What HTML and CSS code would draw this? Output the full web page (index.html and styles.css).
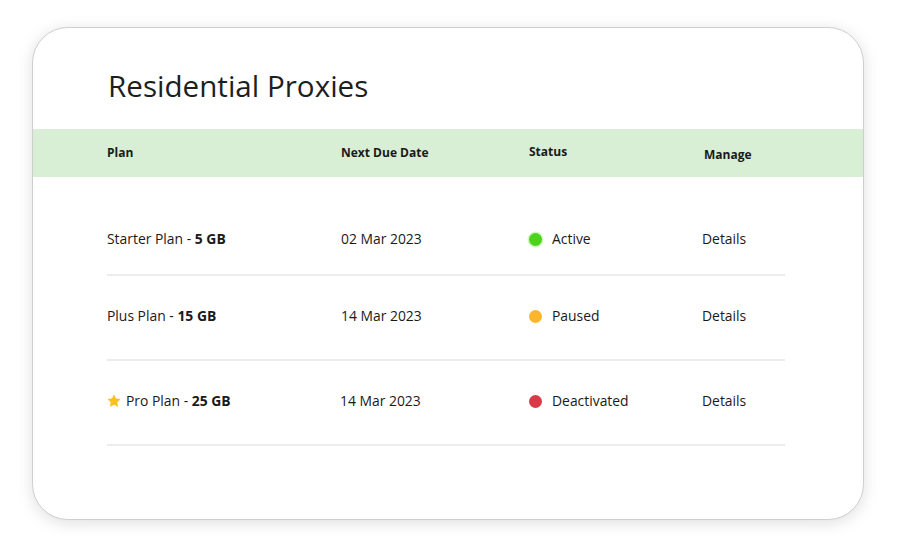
FILE: index.html
```html
<!DOCTYPE html>
<html lang="en">
<head>
<meta charset="utf-8">
<title>Residential Proxies</title>
<link rel="stylesheet" href="styles.css">
</head>
<body>
<div class="card">
  <h1 class="title">Residential Proxies</h1>
  <div class="head">
    <div class="cols">
      <div class="h">Plan</div>
      <div class="h">Next Due Date</div>
      <div class="h h-status">Status</div>
      <div class="h h-manage">Manage</div>
    </div>
  </div>
  <div class="rows">
    <div class="row row-first">
      <div class="cell">Starter Plan - <b>5 GB</b></div>
      <div class="cell">02 Mar 2023</div>
      <div class="cell status"><span class="dot dot-active"></span>Active</div>
      <div class="cell manage">Details</div>
    </div>
    <div class="row">
      <div class="cell">Plus Plan - <b>15 GB</b></div>
      <div class="cell">14 Mar 2023</div>
      <div class="cell status"><span class="dot dot-paused"></span>Paused</div>
      <div class="cell manage">Details</div>
    </div>
    <div class="row">
      <div class="cell"><svg class="star" viewBox="0 0 24 24" width="14" height="14"><path d="M12 1.8l3.1 6.5 7.1.9-5.2 4.9 1.3 7.1L12 17.8l-6.3 3.4L7 14.1 1.8 9.2l7.1-.9z" fill="#fbc21f" stroke="#f5b50f" stroke-width="1" stroke-linejoin="round"/></svg>Pro Plan - <b>25 GB</b></div>
      <div class="cell date-shift">14 Mar 2023</div>
      <div class="cell status"><span class="dot dot-off"></span>Deactivated</div>
      <div class="cell manage">Details</div>
    </div>
  </div>
</div>
</body>
</html>
```
FILE: styles.css
```css
* { box-sizing: border-box; }
html, body { margin: 0; padding: 0; background: #fff; }
body {
  font-family: "Open Sans", "Noto Sans", sans-serif;
  color: #1c1c1c;
  width: 900px;
  height: 555px;
  padding: 27px 0 0 32px;
}
.card {
  width: 832px;
  height: 493px;
  border: 1px solid #cfcfcf;
  border-radius: 36px;
  background: #fff;
  box-shadow: 0 3px 16px rgba(0, 0, 0, 0.13);
  overflow: hidden;
}
.title {
  margin: 0;
  padding: 38px 0 0 75px;
  height: 101px;
  font-size: 29.6px;
  font-weight: 400;
  line-height: 40px;
  color: #1e1e1e;
}
.head {
  background: #d9efd5;
  height: 48px;
  padding-left: 74px;
  display: flex;
  align-items: center;
}
.cols, .row {
  display: grid;
  grid-template-columns: 234px 188px 175px 81px;
}
.h {
  font-size: 12px;
  font-weight: 700;
  color: #1a1a1a;
  line-height: 16px;
}
.h-status { position: relative; top: -1px; }
.h-manage { position: relative; top: 2px; }
.rows { padding-left: 74px; }
.row {
  width: 678px;
  padding: 30px 0 33px;
  border-bottom: 2px solid #ececec;
  align-items: center;
}
.row-first { padding: 52px 0 25px; }
.cell {
  font-size: 13.9px;
  line-height: 20px;
  display: flex;
  align-items: center;
  white-space: pre;
  color: #1a1a1a;
}
.cell b { font-weight: 700; }
.star { margin-right: 5px; flex: none; }
.date-shift { margin-left: -1px; }
.dot {
  width: 13px;
  height: 13px;
  border-radius: 50%;
  margin-right: 10px;
  flex: none;
}
.dot-active { background: #4cd41a; box-shadow: 0 0 0 1.5px #d6f5c8; }
.dot-paused { background: #fbb62c; }
.dot-off { background: #da3a45; }
.manage { margin-left: -2px; }
```
